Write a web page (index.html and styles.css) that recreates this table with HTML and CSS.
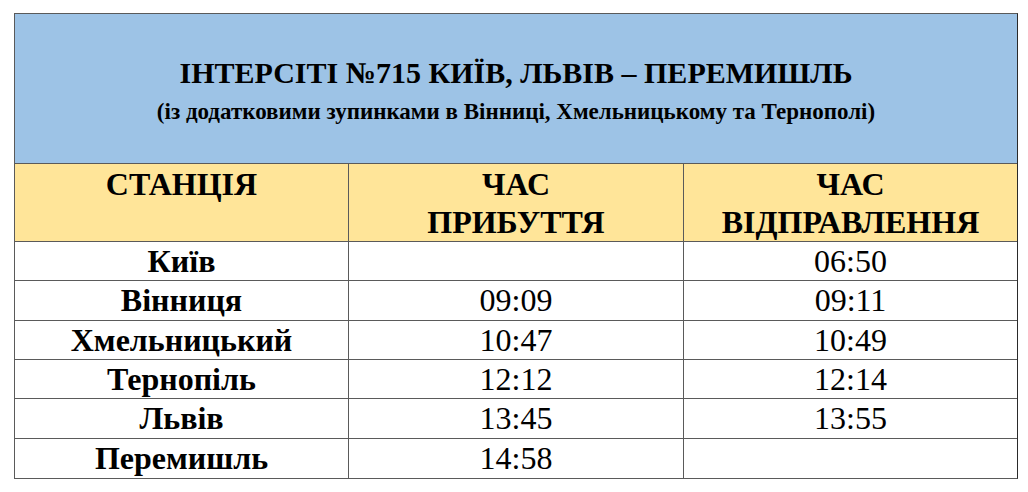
FILE: index.html
```html
<!DOCTYPE html>
<html>
<head>
<meta charset="utf-8">
<link rel="stylesheet" href="styles.css">
</head>
<body>
<div class="sheet">
  <div class="banner">
    <p class="title">ІНТЕРСІТІ №715 КИЇВ, ЛЬВІВ – ПЕРЕМИШЛЬ</p>
    <p class="subtitle">(із додатковими зупинками в Вінниці, Хмельницькому та Тернополі)</p>
  </div>
  <div class="grid">
    <div class="cell head">СТАНЦІЯ</div>
    <div class="cell head">ЧАС<br>ПРИБУТТЯ</div>
    <div class="cell head last">ЧАС<br>ВІДПРАВЛЕННЯ</div>

    <div class="cell st">Київ</div>
    <div class="cell"></div>
    <div class="cell last">06:50</div>

    <div class="cell st">Вінниця</div>
    <div class="cell">09:09</div>
    <div class="cell last">09:11</div>

    <div class="cell st">Хмельницький</div>
    <div class="cell">10:47</div>
    <div class="cell last">10:49</div>

    <div class="cell st">Тернопіль</div>
    <div class="cell">12:12</div>
    <div class="cell last">12:14</div>

    <div class="cell st">Львів</div>
    <div class="cell">13:45</div>
    <div class="cell last">13:55</div>

    <div class="cell st end">Перемишль</div>
    <div class="cell end">14:58</div>
    <div class="cell last end"></div>
  </div>
</div>
</body>
</html>
```

FILE: styles.css
```css
html, body {
  margin: 0;
  padding: 0;
  background: #ffffff;
}
body {
  padding: 13px 0 0 14px;
  color: #000;
}
.sheet {
  width: 1004px;
  box-sizing: border-box;
  border: 1px solid #5a5a5a;
  border-right-color: #2a2a2a;
}
.banner {
  height: 150px;
  box-sizing: border-box;
  padding-top: 42px;
  background: #9dc3e6;
  border-bottom: 1px solid #5a5a5a;
  text-align: center;
}
.title {
  margin: 0;
  font-family: "Times New Roman", "Liberation Serif", "DejaVu Serif", serif;
  font-size: 30px;
  font-weight: bold;
  line-height: 34px;
}
.subtitle {
  margin: 7px 0 0;
  font-family: "Times New Roman", "Liberation Serif", "DejaVu Serif", serif;
  font-size: 23px;
  font-weight: bold;
  line-height: 30px;
}
.grid {
  display: grid;
  grid-template-columns: 334px 335px 333px;
  grid-template-rows: 78px repeat(6, 39.33px);
}
.cell {
  box-sizing: border-box;
  border-right: 1px solid #5a5a5a;
  border-bottom: 1px solid #5a5a5a;
  text-align: center;
  font-family: "Times New Roman", "Liberation Serif", "DejaVu Serif", serif;
  font-size: 32px;
  line-height: 38.33px;
}
.cell.last {
  border-right: 0;
}
.cell.end {
  border-bottom: 0;
}
.cell.head {
  background: #ffe599;
  font-weight: bold;
  line-height: 38px;
  padding-top: 1px;
}
.cell.st {
  font-weight: bold;
}
```
